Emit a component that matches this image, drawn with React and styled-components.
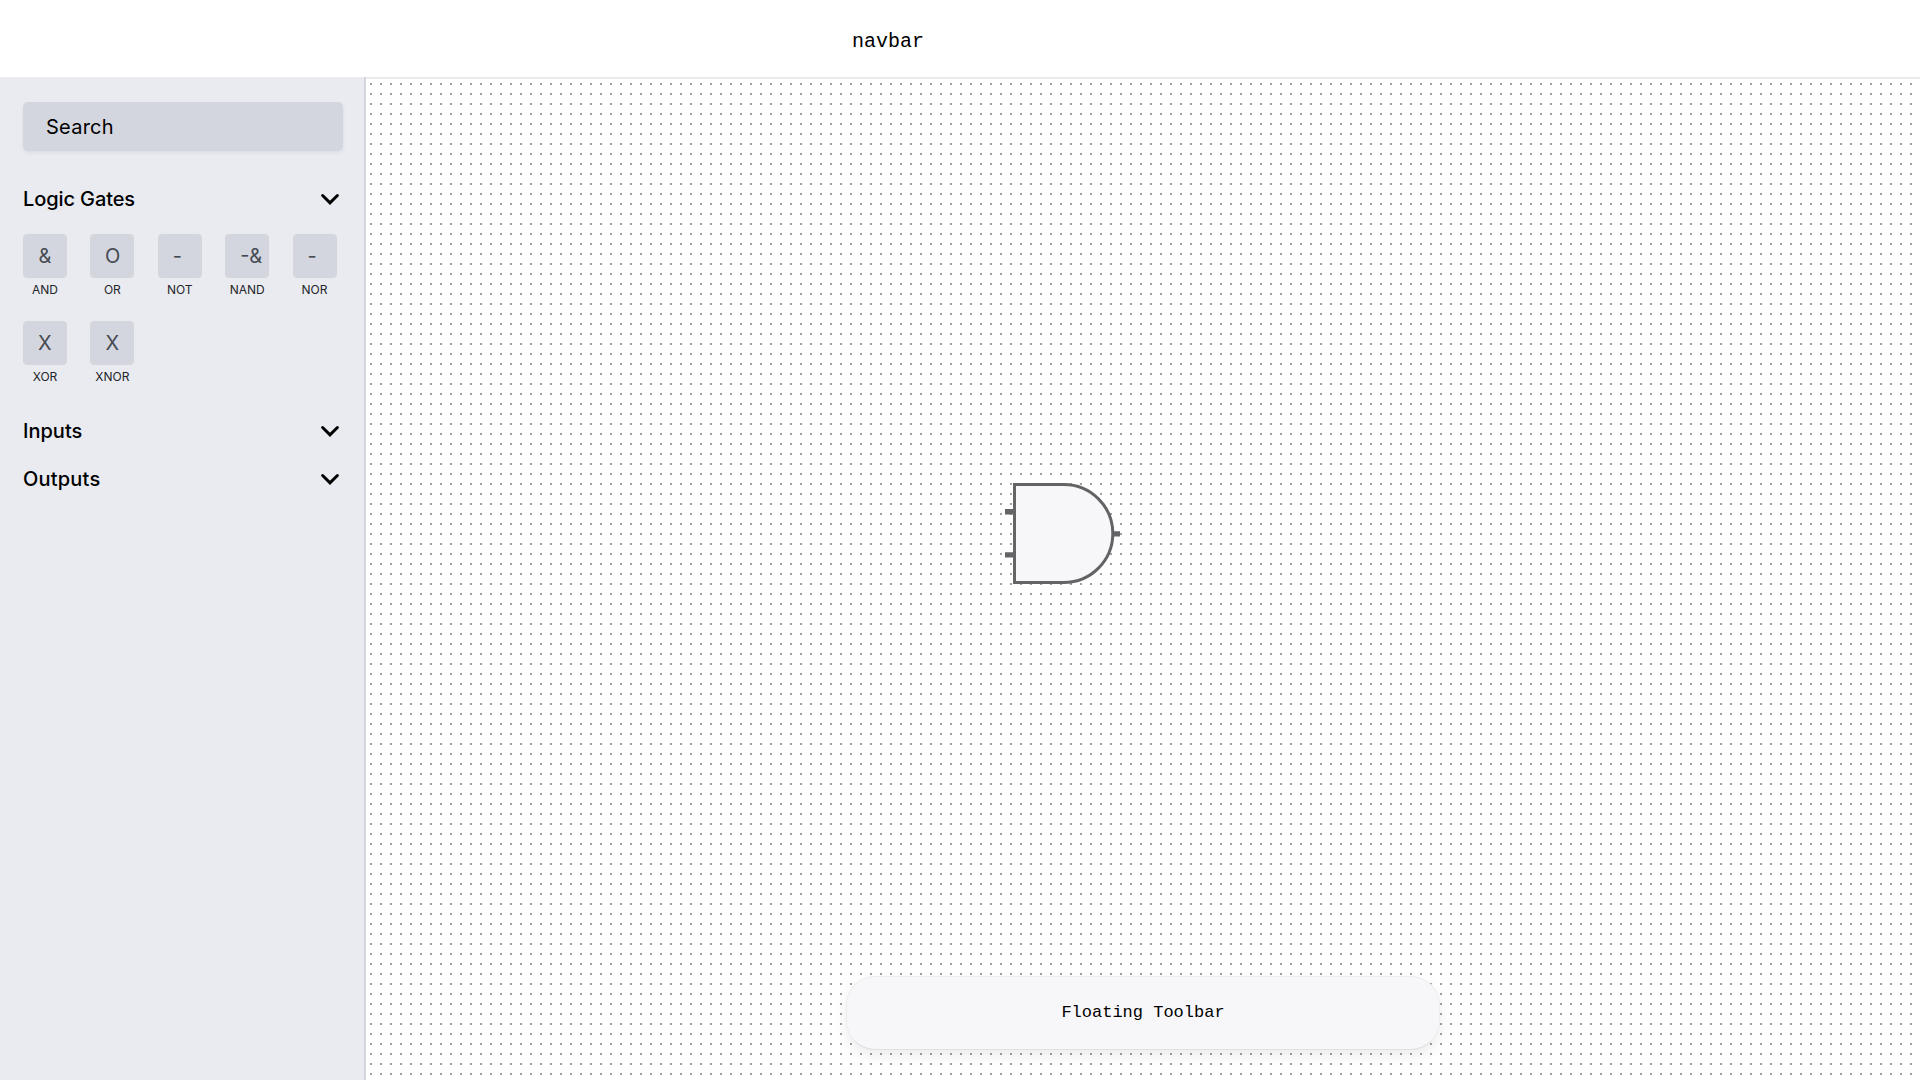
import React from "react";
import styled, { createGlobalStyle } from "styled-components";

const GlobalStyle = createGlobalStyle`
  * { box-sizing: border-box; }
  body { margin: 0; overflow: hidden; background: #fff; color: #000; }
`;

const sans = `Inter, "Liberation Sans", sans-serif`;
const mono = `"Liberation Mono", monospace`;

const Page = styled.div`
  display: flex;
  flex-direction: column;
  width: 100vw;
  height: 100vh;
`;

const Navbar = styled.header`
  flex: 0 0 77px;
  padding: 28px 0 0 852px;
  font: 400 20px/27px ${mono};
`;

const Workspace = styled.div`
  display: flex;
  flex: 1;
  min-height: 0;
`;

const Sidebar = styled.aside`
  flex: 0 0 366px;
  padding: 25px 21px 0 23px;
  background: #e9ebf0;
  border-right: 2px solid #d2d5de;
  font-family: ${sans};
`;

const SearchBox = styled.div`
  display: flex;
  align-items: center;
  width: 320px;
  height: 49px;
  padding: 1px 23px 0;
  border-radius: 5px;
  background: #d3d6de;
  box-shadow: 0 2px 4px rgba(0, 0, 0, 0.06);
  font-size: 20px;
  font-weight: 400;
  letter-spacing: 0.25px;
`;

const SectionHeader = styled.div`
  display: flex;
  align-items: center;
  justify-content: space-between;
  width: 320px;
  height: 48px;
  padding-right: 3px;
  font-size: 20px;
  font-weight: 500;
`;

const SectionTitle = styled.span`
  letter-spacing: ${(p) => p.$spacing || "0"};
`;

const Sections = styled.div`
  padding-top: 24px;
`;

const GateGrid = styled.div`
  display: grid;
  grid-template-columns: repeat(5, 44px);
  column-gap: 23.4px;
  row-gap: 23px;
  padding: 11px 0 23px;
`;

const GateItem = styled.div`
  display: flex;
  flex-direction: column;
  align-items: center;
  height: 63.5px;
`;

const GateTile = styled.div`
  flex: 0 0 44px;
  width: 44px;
  padding-left: ${(p) => p.$inset};
  border-radius: 4px;
  background: #d3d6de;
  border: 1px solid #d3d6da;
  color: #464a53;
  font-size: 20px;
  font-weight: 400;
  line-height: 42px;
  white-space: nowrap;
`;

const GateLabel = styled.span`
  padding-top: 5px;
  color: #24262a;
  font-size: 12px;
  font-weight: 400;
  line-height: 14px;
`;

const Canvas = styled.main`
  position: relative;
  flex: 1;
  border-top: 2px solid #ebebeb;
  background: conic-gradient(from 270deg at 2px 2px, #a0a0a0 90deg, #fff 0) 4px 4px / 10px 10px;
`;

const GateNode = styled.svg`
  position: absolute;
  left: 639px;
  top: 404px;
`;

const Toolbar = styled.div`
  position: absolute;
  left: 480px;
  top: 897px;
  display: flex;
  justify-content: center;
  width: 594px;
  height: 74px;
  padding-top: 24px;
  border: 1px solid #ededef;
  border-bottom-color: #e0e0e3;
  border-radius: 29px;
  background: #f7f7f9;
  box-shadow: 0 6px 14px rgba(0, 0, 0, 0.08);
  font: 400 17px/24px ${mono};
`;

const Chevron = () => (
  <svg width="20" height="14" viewBox="0 0 20 14" fill="none" stroke="#000" strokeWidth="3">
    <path d="M2.6 3.5 10 10.9 17.4 3.5" strokeLinecap="round" />
  </svg>
);

const gates = [
  { name: "AND", symbol: "&", inset: "14.5px" },
  { name: "OR", symbol: "O", inset: "13.5px" },
  { name: "NOT", symbol: "-", inset: "14px" },
  { name: "NAND", symbol: "-&", inset: "14px" },
  { name: "NOR", symbol: "-", inset: "14px" },
  { name: "XOR", symbol: "X", inset: "14px" },
  { name: "XNOR", symbol: "X", inset: "14px" },
];

const Section = ({ title, spacing, children }) => (
  <section>
    <SectionHeader>
      <SectionTitle $spacing={spacing}>{title}</SectionTitle>
      <Chevron />
    </SectionHeader>
    {children}
  </section>
);

export default function App() {
  return (
    <Page>
      <GlobalStyle />
      <Navbar>navbar</Navbar>
      <Workspace>
        <Sidebar>
          <SearchBox>Search</SearchBox>
          <Sections>
            <Section title="Logic Gates" spacing="-0.1px">
              <GateGrid>
                {gates.map((g) => (
                  <GateItem key={g.name}>
                    <GateTile $inset={g.inset}>{g.symbol}</GateTile>
                    <GateLabel>{g.name}</GateLabel>
                  </GateItem>
                ))}
              </GateGrid>
            </Section>
            <Section title="Inputs" />
            <Section title="Outputs" spacing="0.2px" />
          </Sections>
        </Sidebar>
        <Canvas>
          <GateNode width="116" height="102" viewBox="0 0 116 102">
            <path d="M0 28.8H8M0 71.9H8M108 50.9H115" stroke="#646466" strokeWidth="5.4" />
            <path
              d="M9.5 1.5H58.8A49 49 0 0 1 58.8 99.5H9.5Z"
              fill="#f7f7f9"
              stroke="#646466"
              strokeWidth="3"
            />
          </GateNode>
          <Toolbar>Floating Toolbar</Toolbar>
        </Canvas>
      </Workspace>
    </Page>
  );
}
